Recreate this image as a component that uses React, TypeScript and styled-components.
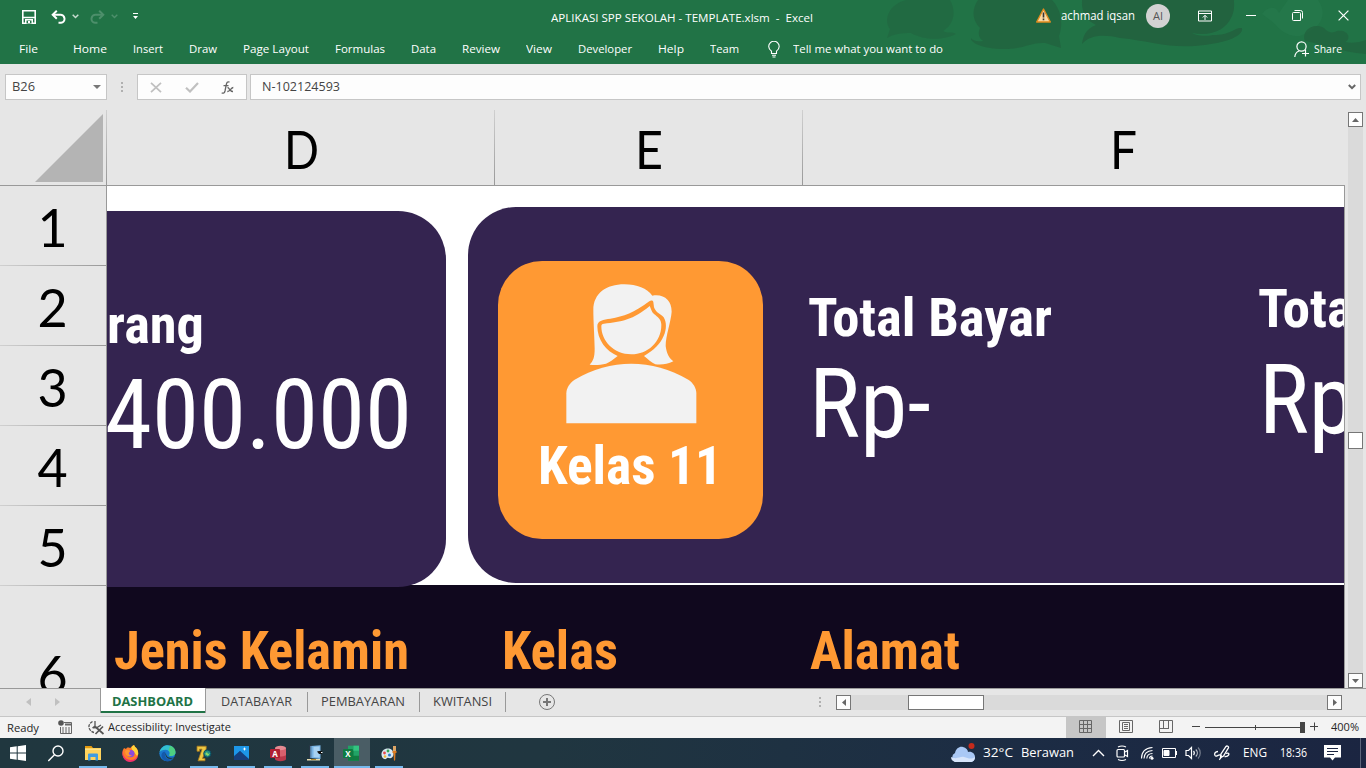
import React, { useLayoutEffect, useRef, useState } from 'react';
import styled, { createGlobalStyle, css } from 'styled-components';

const GlobalStyle = createGlobalStyle`
  * { box-sizing: border-box; }
  body { margin: 0; overflow: hidden; background: #e6e6e6; }
  svg { display: block; flex: none; }
`;

const ui = `'Open Sans', 'Noto Sans', sans-serif`;

/* ---------- text that is condensed or widened to a given width ---------- */

const FitBox = styled.span<{ $w: number }>`
  display: block;
  flex: none;
  width: ${p => p.$w}px;
  white-space: nowrap;
`;
const FitInner = styled.span`
  display: inline-block;
  white-space: pre;
  transform-origin: 0 50%;
`;

function Fit({ w, children }: { w: number; children: string }) {
  const ref = useRef<HTMLSpanElement>(null);
  const [scale, setScale] = useState(1);
  useLayoutEffect(() => {
    if (ref.current && ref.current.offsetWidth) {
      const natural = parseFloat(getComputedStyle(ref.current).width) || ref.current.offsetWidth;
      setScale(w / natural);
    }
  }, [w, children]);
  return (
    <FitBox $w={w}>
      <FitInner ref={ref} style={{ transform: `scaleX(${scale})` }}>{children}</FitInner>
    </FitBox>
  );
}

/* ---------- window frame ---------- */

const Window = styled.div`
  width: 1366px;
  height: 768px;
  display: flex;
  flex-direction: column;
  overflow: hidden;
  font: 12px/16px ${ui};
  background: #e6e6e6;
`;

const Header = styled.header`
  position: relative;
  height: 64px;
  flex: none;
  background: #217346;
  color: #fff;
`;
const HeaderArt = styled.svg`
  position: absolute;
  right: 0;
  top: 0;
`;
const TitleRow = styled.div`
  position: relative;
  height: 33px;
  display: flex;
  align-items: center;
`;
const QuickAccess = styled.div`
  display: flex;
  align-items: center;
  width: 551px;
  padding-left: 22px;
`;
const Spacer = styled.span<{ $w: number }>`
  flex: none;
  width: ${p => p.$w}px;
`;
const TitleText = styled.div`
  padding-top: 3px;
  width: 485px;
  font-size: 11.5px;
`;
const Account = styled.div`
  display: flex;
  align-items: center;
  padding-bottom: 2px;
`;
const Avatar = styled.span`
  width: 24px;
  height: 24px;
  margin: 0 28px 0 11px;
  border-radius: 50%;
  display: flex;
  align-items: center;
  justify-content: center;
  background: #d2d2d2;
  color: #555;
  font-size: 11px;
`;
const Ribbon = styled.nav`
  position: relative;
  height: 31px;
  display: flex;
  align-items: center;
  padding: 1px 0 0 19px;
  font-size: 11.5px;
`;
const RibbonTab = styled.span<{ $first?: boolean }>`
  margin-right: ${p => (p.$first ? 35 : 26)}px;
`;

/* ---------- formula bar ---------- */

const FormulaBar = styled.div`
  height: 46px;
  flex: none;
  display: flex;
  padding: 10px 5px 0;
  color: #444;
`;
const Field = styled.div<{ $w?: number; $pad: number }>`
  display: flex;
  align-items: center;
  height: 26px;
  ${p => (p.$w ? css`width: ${p.$w}px;` : css`flex: 1;`)}
  padding: 0 4px 0 ${p => p.$pad}px;
  border: 1px solid #c6c6c6;
  background: #fdfdfd;
`;
const Push = styled.span`
  flex: 1;
`;
const Grip = styled.span<{ $m: string }>`
  display: flex;
  flex-direction: column;
  flex: none;
  gap: 2px;
  margin: ${p => p.$m};
`;
const GripDot = styled.i`
  width: 2px;
  height: 2px;
  background: #b0b0b0;
`;

/* ---------- worksheet ---------- */

const Work = styled.div`
  display: flex;
  height: 578px;
  flex: none;
`;
const Grid = styled.div`
  width: 1345px;
  display: flex;
  flex-direction: column;
`;
const ColumnHeads = styled.div`
  display: flex;
  height: 76px;
  flex: none;
  overflow: hidden;
  border-bottom: 1px solid #999;
  font: 52px/76px Lato, sans-serif;
  color: #000;
`;
const vLine = css`
  background-image: linear-gradient(#d0d0d0, #999);
  background-size: 1px 100%;
  background-position: right;
  background-repeat: no-repeat;
`;
const Corner = styled.div`
  width: 107px;
  flex: none;
  padding: 4px 0 0 35px;
  ${vLine}
`;
const ColumnHead = styled.div<{ $w: number }>`
  width: ${p => p.$w}px;
  flex: none;
  display: flex;
  justify-content: center;
  padding-top: 1px;
  ${vLine}
`;
const GridBody = styled.div`
  display: flex;
  height: 502px;
`;
const RowHeads = styled.div`
  width: 107px;
  flex: none;
  overflow: hidden;
  border-right: 1px solid #999;
  font: 52px/80px Lato, sans-serif;
  color: #000;
`;
const RowHead = styled.div<{ $tall?: boolean }>`
  height: ${p => (p.$tall ? 180 : 80)}px;
  padding: ${p => (p.$tall ? 48 : 1)}px 1px 0 0;
  text-align: center;
  background: linear-gradient(90deg, #d0d0d0, #999) bottom / 100% 1px no-repeat;
`;
const Sheet = styled.main`
  position: relative;
  width: 1238px;
  overflow: hidden;
  border-right: 1px solid #999;
  background: #fff;
  font-family: Roboto, sans-serif;
  font-stretch: 75%;
`;
const TableHead = styled.div`
  display: flex;
  height: 110px;
  margin-top: 399px;
  padding: 39px 0 0 7px;
  background: #10081e;
  color: #ff9933;
  font-size: 53.33px;
  line-height: 54px;
  font-weight: 700;
`;
const HeadCell = styled.div<{ $w: number }>`
  width: ${p => p.$w}px;
  flex: none;
`;
/* drawing objects that float over the cells */
const Card = styled.section<{ $x: number; $y: number; $w: number }>`
  position: absolute;
  left: ${p => p.$x}px;
  top: ${p => p.$y}px;
  width: ${p => p.$w}px;
  height: 376px;
  border-radius: 48px;
  background: #342450;
`;
const Badge = styled.div`
  position: absolute;
  left: 30px;
  top: 54px;
  width: 265px;
  height: 278px;
  border-radius: 44px;
  padding: 23px 0 0 40px;
  background: #ff9933;
  color: #fff;
  font-size: 53.33px;
  line-height: 54px;
  font-weight: 700;
`;
const PersonIcon = styled.svg`
  margin: 0 0 14px 28px;
`;
const Caption = styled.div<{ $x: number; $y: number }>`
  position: absolute;
  left: ${p => p.$x}px;
  top: ${p => p.$y}px;
  color: #fff;
  font-size: 53.33px;
  line-height: 54px;
  font-weight: 700;
`;
const Amount = styled(Caption)`
  font-size: 96px;
  line-height: 96px;
  font-weight: 400;
`;

/* ---------- scroll bars ---------- */

const VScroll = styled.div`
  width: 15px;
  margin: 2px 0 0 3px;
  display: flex;
  flex-direction: column;
  background: #dadada;
`;
const ScrollButton = styled.span`
  width: 15px;
  height: 15px;
  flex: none;
  display: flex;
  align-items: center;
  justify-content: center;
  border: 1px solid #767676;
  background: #fdfdfd;
`;
const Thumb = styled.span<{ $w: number; $h: number; $m: string }>`
  width: ${p => p.$w}px;
  height: ${p => p.$h}px;
  margin: ${p => p.$m};
  border: 1px solid #767676;
  background: #fff;
`;
const HScroll = styled.div`
  display: flex;
  width: 506px;
  height: 15px;
  background: #dadada;
`;

/* ---------- sheet tabs and status bar ---------- */

const TabStrip = styled.div`
  height: 29px;
  flex: none;
  display: flex;
  border-top: 1px solid #999;
  border-bottom: 1px solid #c6c6c6;
  color: #444;
`;
const TabNav = styled.div`
  display: flex;
  gap: 24px;
  width: 100px;
  padding: 9px 0 0 26px;
`;
const ActiveTab = styled.div`
  width: 106px;
  height: 25px;
  margin-top: -1px;
  padding: 6px 0 0 11px;
  border: solid #999;
  border-width: 0 1px;
  background: linear-gradient(#217346, #217346) bottom / 100% 2px no-repeat #fff;
  color: #217346;
  font-weight: 700;
`;
const SheetTab = styled.div<{ $w: number; $pad?: number }>`
  width: ${p => p.$w}px;
  height: 20px;
  margin-top: 3px;
  padding: 2px 0 0 ${p => p.$pad ?? 13}px;
  border-right: 1px solid #999;
`;
const AddSheet = styled.div`
  width: 313px;
  padding: 5px 0 0 33px;
`;
const HScrollArea = styled.div`
  display: flex;
  padding-top: 6px;
`;
const StatusBar = styled.div`
  height: 21px;
  flex: none;
  display: flex;
  align-items: center;
  padding-left: 7px;
  background: #f3f3f3;
  color: #262626;
  font-size: 11px;
`;
const StatusText = styled.span`
  padding-bottom: 2px;
`;
const ViewButton = styled.span<{ $on?: boolean }>`
  width: 40px;
  height: 21px;
  display: flex;
  align-items: flex-start;
  justify-content: center;
  padding: 3px 1px 0 0;
  background: ${p => (p.$on ? '#c6c6c6' : 'transparent')};
`;

/* ---------- taskbar ---------- */

const Taskbar = styled.footer`
  height: 30px;
  flex: none;
  display: flex;
  padding-left: 1px;
  background: linear-gradient(90deg, #20373f, #203640 40%, #1c2c44 75%, #1b2541);
  color: #fff;
  font-size: 12px;
`;
const TaskButton = styled.span<{ $running?: boolean; $active?: boolean }>`
  width: ${p => (p.$active ? 36 : 37)}px;
  height: 30px;
  margin-right: ${p => (p.$active ? 1 : 0)}px;
  display: flex;
  justify-content: center;
  padding: 7px 1px 0 0;
  background: ${p =>
    p.$active
      ? 'linear-gradient(#76b9ed, #76b9ed) bottom / 100% 2px no-repeat #4a5d65'
      : p.$running
        ? 'linear-gradient(#76b9ed, #76b9ed) 4px 100% / 28px 2px no-repeat'
        : 'none'};
`;
const StartLogo = styled.svg`
  margin-right: 2px;
`;
const Tray = styled.div`
  display: flex;
  align-items: center;
  margin-left: auto;
  width: 416px;
`;
const DesktopEdge = styled.span`
  height: 30px;
  margin-left: 19px;
  border-left: 1px solid #5b647a;
`;

/* ---------- icons ---------- */

const Chevron = ({ color, size = 7 }: { color: string; size?: number }) => (
  <svg width={size} height="5" viewBox="0 0 7 5" fill="none" stroke={color} strokeWidth="1.5">
    <path d="M.7.8 3.5 3.5 6.3.8" />
  </svg>
);
const Triangle = ({ d, color = '#666', w = 7, h = 7 }: { d: string; color?: string; w?: number; h?: number }) => (
  <svg width={w} height={h} viewBox={`0 0 ${w} ${h}`} fill={color}><path d={d} /></svg>
);
const Undo = ({ flip, color }: { flip?: boolean; color: string }) => (
  <svg width="15" height="14" viewBox="0 0 15 14" fill="none" stroke={color} strokeWidth="2">
    <g transform={flip ? 'translate(15 0) scale(-1 1)' : undefined}>
      <path d="M2 4.8H9a4 4 0 0 1 1 8H7.5" /><path d="M5.8.8 1.7 4.8l4.1 4" />
    </g>
  </svg>
);
const RibbonArt = () => (
  <HeaderArt width="486" height="64" viewBox="880 0 486 64" fill="#22633f">
    <path d="M906 0C889 4 883 20 890 29L887 38C893 34 902 33 911 33C925 41 945 40 956 34C952 31 947 34 943 31C955 24 956 10 950 0Z" opacity=".55" />
    <path d="M978 0C970 12 974 22 980 28C976 38 983 40 983 41C977 42 972 40 971 38C970 43 985 50 1008 49C1025 48 1032 42 1045 43L1061 48L1059 36C1064 22 1060 8 1052 0Z" opacity=".8" />
    <path d="M1082 0C1081 14 1088 21 1096 25C1085 29 1083 37 1082 44C1090 35 1103 34 1120 38C1150 41 1168 48 1195 46C1222 44 1244 37 1242 28C1234 27 1232 35 1213 35C1203 37 1195 35 1192 33C1212 37 1226 29 1231 18C1235 11 1234 4 1234 0Z" />
    <path d="M1262 14C1268 6 1276 6 1279 13Q1285 4 1288 0H1318C1328 14 1322 28 1300 36C1282 37 1277 24 1270 20Z" fill="#24774a" />
    <path d="M1305 41C1301 31 1313 22 1324 28Q1330 35 1337 31C1348 29 1352 39 1345 42Q1356 44 1366 40V54C1340 52 1322 44 1305 41Z" opacity=".8" />
  </HeaderArt>
);

const White = { fill: 'none', stroke: '#fff' } as const;

const tabs: [string, number][] = [
  ['File', 19], ['Home', 34], ['Insert', 30], ['Draw', 28], ['Page Layout', 66], ['Formulas', 50],
  ['Data', 25], ['Review', 38], ['View', 26], ['Developer', 54], ['Help', 26], ['Team', 29],
];

function TitleBar() {
  return (
    <Header>
      <RibbonArt />
      <TitleRow>
        <QuickAccess>
          <svg width="14" height="14" viewBox="0 0 14 14" {...White} strokeWidth="1.6">
            <path d="M.8.8h12.4v12.4H.8zM1 7.5h12" /><path d="M3 9h8v4H3z" fill="#fff" stroke="none" />
            <path d="M4.5 10.5h5v3h-5z" fill="#217346" stroke="none" /><path d="M6 11h2v2H6z" fill="#fff" stroke="none" />
          </svg>
          <Spacer $w={15} /><Undo color="#fff" /><Spacer $w={6} /><Chevron color="#c8dcd0" />
          <Spacer $w={11} /><Undo flip color="#4d8f6b" /><Spacer $w={6} /><Chevron color="#4d8f6b" />
          <Spacer $w={15} />
          <svg width="5" height="7" viewBox="0 0 5 7" fill="#fff"><path d="M0 0h5v1H0zM0 3h5L2.500 6z" /></svg>
        </QuickAccess>
        <TitleText><Fit w={262}>APLIKASI SPP SEKOLAH - TEMPLATE.xlsm  -  Excel</Fit></TitleText>
        <Account>
          <svg width="15" height="15" viewBox="0 0 15 15">
            <path d="M7.500 1 14.300 14H.7z" fill="#fbd9a2" stroke="#e08a1e" strokeWidth="1.4" strokeLinejoin="round" />
            <path d="M6.700 4.500h1.600v5H6.700zM6.700 10.500h1.600v1.700H6.700z" fill="#333" />
          </svg>
          <Spacer $w={10} /><Fit w={74}>achmad iqsan</Fit>
          <Avatar>AI</Avatar>
          <svg width="14" height="12" viewBox="0 0 14 12" {...White}>
            <path d="M.5 1h13v10H.5zM1 3.500h12M7 10V5.500M4.800 7.500 7 5.300l2.200 2.200" />
          </svg>
          <Spacer $w={34} />
          <svg width="11" height="12" viewBox="0 0 11 12" {...White}><path d="M0 5.500h10" /></svg>
          <Spacer $w={35} />
          <svg width="11" height="11" viewBox="0 0 11 11" {...White}>
            <path d="M1.500 2.500h6a1 1 0 0 1 1 1v7h-7a1 1 0 0 1-1-1v-6a1 1 0 0 1 1-1zM2.500.5h6a2 2 0 0 1 2 2v6" />
          </svg>
          <Spacer $w={35} />
          <svg width="11" height="11" viewBox="0 0 11 11" {...White} strokeWidth="1.200"><path d="m.6.6 9.800 9.800M10.400.6.6 10.400" /></svg>
        </Account>
      </TitleRow>
      <Ribbon>
        {tabs.map(([name, w], i) => <RibbonTab key={name} $first={i === 0}><Fit w={w}>{name}</Fit></RibbonTab>)}
        <Spacer $w={3} />
        <svg width="12" height="17" viewBox="0 0 12 17" {...White} strokeWidth="1.100">
          <path d="M3.500 12.500v-2.300C2 9 .7 7.600.7 5.500a5.100 5.100 0 0 1 10.500 0c0 2.100-1.300 3.500-2.700 4.700v2.300zM4 14.300h4M4.500 16h3" />
        </svg>
        <Spacer $w={13} /><Fit w={150}>Tell me what you want to do</Fit><Spacer $w={351} />
        <svg width="16" height="17" viewBox="0 0 16 17" {...White} strokeWidth="1.200">
          <circle cx="7.500" cy="5.500" r="4.600" /><path d="M.8 16c.2-3 2-5.200 4.200-6M11.500 8.500v7M8 12.500h7" />
        </svg>
        <Spacer $w={4} /><Fit w={28}>Share</Fit>
      </Ribbon>
    </Header>
  );
}

function FormulaRow() {
  return (
    <FormulaBar>
      <Field $w={102} $pad={6}>
        <Fit w={23}>B26</Fit><Push /><Triangle w={8} h={4} d="M0 0h8L4 4z" color="#777" /><Spacer $w={1} />
      </Field>
      <Grip $m="8px 14px 0"><GripDot /><GripDot /><GripDot /></Grip>
      <Field $w={110} $pad={12}>
        <svg width="12" height="11" viewBox="0 0 12 11" stroke="#c0c0c0" strokeWidth="1.800"><path d="m1 .8 10 9.400M11 .8 1 10.200" /></svg>
        <Spacer $w={23} />
        <svg width="14" height="11" viewBox="0 0 14 11" fill="none" stroke="#c0c0c0" strokeWidth="2.200"><path d="m1 5.800 4 3.700L13 1" /></svg>
        <Spacer $w={22} />
        <svg width="13" height="13" viewBox="0 0 13 13" fill="none" stroke="#666" strokeWidth="1.300">
          <path d="M8.500 1.200C6.500.2 5.700 1.500 5.200 4L4 10c-.5 2-1.500 2.600-3.300 1.900M2.500 4.700h5" />
          <path d="M6.500 6.500c2 0 2 4.300 5.500 4M12.300 6.500c-2.300 0-3.300 4.300-6 4" />
        </svg>
      </Field>
      <Spacer $w={3} />
      <Field $pad={11}>
        <Fit w={78}>N-102124593</Fit><Push />
        <svg width="8" height="6" viewBox="0 0 8 6" fill="none" stroke="#666" strokeWidth="2"><path d="m.8 1 3.200 3.200L7.200 1" /></svg>
      </Field>
    </FormulaBar>
  );
}

function Worksheet() {
  return (
    <Work>
      <Grid>
        <ColumnHeads>
          <Corner><svg width="68" height="69" viewBox="0 0 68 69"><path d="M68 0v68H0z" fill="#b4b4b4" /></svg></Corner>
          <ColumnHead $w={388}><Fit w={35}>D</Fit></ColumnHead>
          <ColumnHead $w={308}><Fit w={28}>E</Fit></ColumnHead>
          <ColumnHead $w={640}><Fit w={27}>F</Fit></ColumnHead>
        </ColumnHeads>
        <GridBody>
          <RowHeads>
            {[1, 2, 3, 4, 5, 6].map(n => <RowHead key={n} $tall={n === 6}>{n}</RowHead>)}
          </RowHeads>
          <Sheet>
            <TableHead>
              <HeadCell $w={388}><Fit w={295}>Jenis Kelamin</Fit></HeadCell>
              <HeadCell $w={308}><Fit w={116}>Kelas</Fit></HeadCell>
              <HeadCell $w={300}><Fit w={150}>Alamat</Fit></HeadCell>
            </TableHead>
            <Card $x={-400} $y={25} $w={739}>
              <Caption $x={400} $y={87}><Fit w={97}>rang</Fit></Caption>
              <Amount $x={398} $y={156}><Fit w={307}>400.000</Fit></Amount>
            </Card>
            <Card $x={361} $y={21} $w={1000}>
              <Badge>
                <PersonIcon width="132" height="141" viewBox="317 280 396 423" fill="#f2f2f2">
                  <path d="M318 698V608C318 592 328 577 343 567C450 503 575 503 684 567C699 577 708 592 708 608V698Z" />
                  <path d="M388 522C398 511 403 500 403 474C402 430 399 390 399 358C399 308 438 281 492 281C530 281 560 293 576 315C611 309 634 329 634 363C632 392 616 435 616 466C619 490 627 502 639 512C621 521 604 523 585 521C574 516 562 505 551 496C611 464 628 410 610 380C601 370 586 366 581 350L579 334C577 328 571 329 567 332C520 366 491 378 450 384C430 387 411 389 411 406C411 448 437 481 472 496C460 505 449 515 437 519C420 523 405 524 388 522Z" />
                  <path d="M423 407C423 402 425 400 431 399C482 394 520 387 568 346C572 354 573 363 581 370C592 379 603 385 603 403C603 454 562 491 513 491C460 491 423 451 423 407Z" />
                </PersonIcon>
                <Fit w={184}>Kelas 11</Fit>
              </Badge>
              <Caption $x={340} $y={84}><Fit w={244}>Total Bayar</Fit></Caption>
              <Amount $x={341} $y={149}><Fit w={122}>Rp-</Fit></Amount>
              <Caption $x={790} $y={75}><Fit w={109}>Total</Fit></Caption>
              <Amount $x={791} $y={145}><Fit w={96}>Rp</Fit></Amount>
            </Card>
          </Sheet>
        </GridBody>
      </Grid>
      <VScroll>
        <ScrollButton><Triangle w={7} h={4} d="M0 4h7L3.500 0z" /></ScrollButton>
        <Thumb $w={15} $h={17} $m="305px 0 0" />
        <Push />
        <ScrollButton><Triangle w={7} h={4} d="M0 0h7L3.500 4z" /></ScrollButton>
      </VScroll>
    </Work>
  );
}

function SheetTabs() {
  return (
    <TabStrip>
      <TabNav>
        <Triangle w={5} h={9} d="M5 0v8L0 4z" color="#c0c0c0" />
        <Triangle w={5} h={9} d="M0 0v8l5-4z" color="#c0c0c0" />
      </TabNav>
      <ActiveTab><Fit w={81}>DASHBOARD</Fit></ActiveTab>
      <SheetTab $w={102} $pad={15}><Fit w={71}>DATABAYAR</Fit></SheetTab>
      <SheetTab $w={112}><Fit w={84}>PEMBAYARAN</Fit></SheetTab>
      <SheetTab $w={86}><Fit w={59}>KWITANSI</Fit></SheetTab>
      <AddSheet>
        <svg width="17" height="17" viewBox="0 0 17 17" fill="none" stroke="#777">
          <circle cx="8" cy="8" r="7.500" /><path d="M8 4v8M4 8h8" strokeWidth="2" />
        </svg>
      </AddSheet>
      <HScrollArea>
        <Grip $m="2px 15px 0 0"><GripDot /><GripDot /><GripDot /></Grip>
        <HScroll>
          <ScrollButton><Triangle w={4} h={7} d="M4 0v7L0 3.500z" /></ScrollButton>
          <Thumb $w={76} $h={15} $m="0 0 0 57px" />
          <Push />
          <ScrollButton><Triangle w={4} h={7} d="M0 0v7l4-3.500z" /></ScrollButton>
        </HScroll>
      </HScrollArea>
    </TabStrip>
  );
}

function Status() {
  return (
    <StatusBar>
      <Fit w={32}>Ready</Fit><Spacer $w={19} />
      <StatusText>
        <svg width="14" height="14" viewBox="0 0 14 14" fill="none" stroke="#666">
          <path d="M6 2.500h7.500v11H2.500V7" /><path d="M7 4.500h6" strokeWidth="2" />
          <path d="M4 8h2m1 0h2m1 0h2M4 10h2m1 0h2m1 0h2M4 12h2m1 0h2m1 0h2" /><circle cx="3" cy="3" r="2.800" fill="#555" stroke="none" />
        </svg>
      </StatusText>
      <Spacer $w={16} />
      <svg width="17" height="15" viewBox="0 0 17 15" fill="none" stroke="#555" strokeWidth="1.300">
        <path d="M4.500 1.500C2 3 .5 5 1 7.500S3.500 12 6 12.500" strokeDasharray="3 1" />
        <path d="M7 1v5l-2.500 2M13 5 9 7.500l-4 .3" /><path d="m7 6.500 8.500 7.500M15 6.500 7.500 14" strokeWidth="1.700" />
      </svg>
      <Spacer $w={3} /><StatusText><Fit w={123}>Accessibility: Investigate</Fit></StatusText><Push />
      <ViewButton $on>
        <svg width="13" height="13" viewBox="0 0 13 13" fill="none" stroke="#666"><path d="M.5.5h12v12H.5zM4.500 0v13M8.500 0v13M0 4.500h13M0 8.500h13" /></svg>
      </ViewButton>
      <ViewButton>
        <svg width="14" height="13" viewBox="0 0 14 13" fill="none" stroke="#666"><path d="M.5.5h13v12H.5zM3.500 2.500h7v8h-7zM5 4.500h4M5 6.500h4M5 8.500h4" /></svg>
      </ViewButton>
      <ViewButton>
        <svg width="14" height="13" viewBox="0 0 14 13" fill="none" stroke="#666"><path d="M.5.5h13v12H.5zM4.500 1v7M9.500 1v7M1 8.500h9" /></svg>
      </ViewButton>
      <Spacer $w={5} />
      <StatusText>
        <svg width="128" height="13" viewBox="0 0 128 13" fill="none" stroke="#444">
          <path d="M1 6.500h8M14 7.500h95M64.500 5v5M119 6.500h8M123.500 2.500v8" /><path d="M109 2h5v11h-5z" fill="#444" stroke="none" />
        </svg>
      </StatusText>
      <Spacer $w={12} /><StatusText><Fit w={28}>400%</Fit></StatusText><Spacer $w={7} />
    </StatusBar>
  );
}

const AppTile = ({ dark, letter, children }: { dark: string; letter: string; children: React.ReactNode }) => (
  <svg width="17" height="17" viewBox="0 0 17 17">
    {children}
    <rect x="0" y="4" width="10" height="9" rx="1" fill={dark} />
    <text x="5" y="11.500" fontFamily="Open Sans, sans-serif" fontSize="8" fontWeight="700" fill="#fff" textAnchor="middle">{letter}</text>
  </svg>
);

function TaskbarRow() {
  return (
    <Taskbar>
      <TaskButton>
        <StartLogo width="16" height="16" viewBox="0 0 16 16" fill="#fff"><path d="m0 2.300 6.700-1v6.200H0zM7.700 1.200 16 0v7.500H7.700zM0 8.500h6.700v6.200L0 13.700zM7.700 8.500H16V16l-8.300-1.200z" /></StartLogo>
      </TaskButton>
      <TaskButton>
        <svg width="17" height="17" viewBox="0 0 17 17" {...White} strokeWidth="1.400"><circle cx="10" cy="6" r="5" /><path d="M6.500 9.700.3 16" /></svg>
      </TaskButton>
      <TaskButton $running>
        <svg width="17" height="16" viewBox="0 0 17 16">
          <path d="M0 1h6.500L8 3H0z" fill="#e39a10" /><path d="M0 3h16v12H0z" fill="#ffd35c" /><path d="M0 4h16v1H0z" fill="#fbe08a" />
          <path d="M3 15.500V9.500q0-1 1-1h8q1 0 1 1v6h-2.500V12h-5v3.500z" fill="#3f9be0" />
        </svg>
      </TaskButton>
      <TaskButton>
        <svg width="17" height="17" viewBox="0 0 17 17">
          <path d="M8 3C5.500 2 4.500 3 4 4L2 3C0 6 0 9 1 11.500a8 8 0 0 0 15-1C17 6 15 3 13 2L12 0C9 1 9 3 8 3z" fill="#ff7b29" />
          <path d="M12 0c-2.500 1-3 3-2 4.500L15 11l1.200-2c0-4-1.500-6-3-7z" fill="#ffd43a" /><path d="M1 5c-1 6 3 10 7.500 10 4 0 6.500-2 7.500-5 0 4-3.500 7-8 7C2 17-1 10 1 5z" fill="#f2316b" />
          <circle cx="8.800" cy="8.600" r="3.700" fill="#8b4bdc" /><path d="M3 6c2-2 4-1 5.500 0L7 7.500C6 9 8 11 10 10c-2 3-7 1-7-4z" fill="#ff9633" />
        </svg>
      </TaskButton>
      <TaskButton>
        <svg width="17" height="17" viewBox="0 0 17 17">
          <circle cx="8.300" cy="8.300" r="8" fill="#1a78cc" />
          <path d="M.4 7.500C1.500 3 5 .3 8.500.3c5 0 8 3.500 8 7 0 3.500-4 4.500-6.500 3.200C12 8 10 4.800 6.500 4.800 3.500 4.800 1.500 5.800.4 7.500z" fill="#32bfd0" />
          <path d="M11 .8c3.500 1 5.500 3.700 5.500 6.500 0 3.500-4 4.500-6.500 3.200 1.500-2 .7-4-.5-4.900z" fill="#55d36c" opacity=".8" />
          <path d="M6.500 7c-2 4 1 8.500 7.500 7C10 18 3.500 16.500 2.500 11.500 2 8 4.500 6 6.500 7z" fill="#1459ab" />
          <path d="M7 8c-.3 4.500 5 6 9 4-1.500 2-7 3-8.700 0C6 10 6.300 8.600 7 8z" fill="#20373f" />
        </svg>
      </TaskButton>
      <TaskButton $running>
        <svg width="17" height="17" viewBox="0 0 17 17">
          <path d="M1 1.200h9.200v2.600L6.500 13.500H9v2.300H2L6 4.200H3.500v2H1z" fill="#edc843" stroke="#a9791c" strokeWidth=".8" />
          <circle cx="11.300" cy="8.600" r="3.600" fill="#238f82" stroke="#0b4d63" /><path d="m9 9 2-2 1 2 2-1-2 3z" fill="#8bdc6b" />
        </svg>
      </TaskButton>
      <TaskButton $running>
        <svg width="15" height="16" viewBox="0 0 15 16"><path d="M0 1h15v14H0z" fill="#1d97e8" /><path d="m0 11 6-5 8 9H0z" fill="#0d4d94" /><path d="m0 12 6-6 9 8v1H0z" fill="#173f7c" /><path d="m10.500 2 .6 1.400 1.400.6-1.400.6-.6 1.400-.6-1.400L8.500 4l1.400-.6z" fill="#fff" /></svg>
      </TaskButton>
      <TaskButton $running>
        <AppTile dark="#b01f32" letter="A">
          <path d="M5 3v11c0 1.300 2.500 2.200 5.500 2.200s5.500-.9 5.500-2.200V3z" fill="#b9384a" />
          <path d="M5 3v7.500c4 1.700 8 1.200 11-.3V3z" fill="#d7606d" /><ellipse cx="10.500" cy="3" rx="5.500" ry="2.200" fill="#e58a92" />
        </AppTile>
      </TaskButton>
      <TaskButton $running>
        <svg width="17" height="16" viewBox="0 0 17 16">
          <path d="M2 0h3v13H2z" fill="#273645" /><path d="M4 1 13.500.3V14L4 13z" fill="#79b4e4" /><path d="m6.500 2 6-.5v11l-6-.5z" fill="#a7d2f2" /><path d="M3 1h1.500v12H3z" fill="#557ea3" />
          <path d="M0 14h13v1.500H0z" fill="#e8dcb0" /><path d="M4 14h5v1H4z" fill="#b58b2c" /><path d="M10 6.500 12 6h3v3h-3z" fill="#111" /><path d="M14 7h1.500v1H14z" fill="#fff" />
        </svg>
      </TaskButton>
      <TaskButton $active>
        <AppTile dark="#0f7c41" letter="X">
          <path d="M5 .7h11v15H5z" fill="#21a366" /><path d="M10.500.7H16v5h-5.500z" fill="#33c481" />
          <path d="M5 5.700h5.500v10H5zM10.500 10.700H16v5h-5.500z" fill="#107c41" />
        </AppTile>
      </TaskButton>
      <TaskButton $running>
        <svg width="17" height="17" viewBox="0 0 17 17">
          <path d="M.5 8.500C1 4.500 6 2.500 9.500 4s4 6.500 1.500 8.500-4-1-5.500 1S0 13 .5 8.500z" fill="#d9e8f2" />
          <circle cx="3.500" cy="8" r="1.400" fill="#e5484d" /><circle cx="7" cy="6" r="1.400" fill="#33a852" /><circle cx="4" cy="11.500" r="1.300" fill="#f2b632" /><circle cx="8.500" cy="10" r="1.500" fill="#2d7dd2" />
          <path d="M12 1h3v5h-3z" fill="#dca566" /><path d="M11.500 6h4v2h-1l-.3 7L13 16l-.5-8h-1z" fill="#dc7a20" />
        </svg>
      </TaskButton>
      <Tray>
        <svg width="25" height="20" viewBox="0 0 25 20">
          <path d="M5 19a5 5 0 0 1 0-9C6 5 10 3 13 4c3 .5 5 3 5 5 4-1 7 2 7 5s-2 5-5 5z" fill="#a9c8f5" />
          <path d="M5 19c-3-1-4-3-4-5 6 3 9-1 13 0s7 3 11 0c0 3-2 5-5 5z" fill="#d7e5fb" /><circle cx="21.500" cy="3" r="3" fill="#c42b1c" />
        </svg>
        <Spacer $w={8} /><Fit w={30}>32°C</Fit><Spacer $w={8} /><Fit w={53}>Berawan</Fit><Spacer $w={18} />
        <svg width="13" height="8" viewBox="0 0 13 8" {...White} strokeWidth="1.400"><path d="M1 7l5.500-5.500L12 7" /></svg>
        <Spacer $w={11} />
        <svg width="13" height="17" viewBox="0 0 13 17" {...White} strokeWidth="1.200">
          <rect x="1" y="4.500" width="7.500" height="7.500" rx="1" /><path d="m9 7 2.500-1.500v6L9 10M2 2c3-1.500 5-1.500 8 0M2 14.500c3 1.500 5 1.500 8 0" />
        </svg>
        <Spacer $w={11} />
        <svg width="14" height="14" viewBox="0 0 14 14" {...White} strokeWidth="1.100">
          <path d="M1.500 12.500c0-6.500 4-10.500 11-11M4 12.500C4 8 7 5 12.500 4.500M6.800 12.500c0-3 2-5 5.700-5M9.500 12.500c0-1.500 1-2.500 3-2.500" /><circle cx="12" cy="12.300" r="1.500" fill="#fff" stroke="none" />
        </svg>
        <Spacer $w={8} />
        <svg width="16" height="10" viewBox="0 0 16 10" {...White}><path d="M.5.500h13v9H.5zM14.500 3v4" /><path d="M2 2.500h5v5H2z" fill="#fff" /></svg>
        <Spacer $w={7} />
        <svg width="17" height="14" viewBox="0 0 17 14" {...White} strokeWidth="1.200">
          <path d="M1 4.500h2.500L6.500 1.500v11L3.500 9.500H1zM8.500 5c1 1.200 1 2.800 0 4" /><path d="M10.800 3.500c2 2 2 5 0 7" opacity=".7" /><path d="M13 1.500c3 3 3 8 0 11" opacity=".4" />
        </svg>
        <Spacer $w={11} />
        <svg width="17" height="17" viewBox="0 0 17 17" {...White} strokeWidth="1.300">
          <path d="M5 6.500C2.500 6.500.8 8.500 2 10.500s3-1 5-.5c2 0 1.500 3-.8 4.800" /><path d="m7.500 12.500.5-3.500 5-7.500c1-1.200 3.200 0 2.300 1.600L10.500 11z" /><path d="M13 8.500c2-1 3.500 0 2.500 1.700s-2.500 1.300-4 1.300" />
        </svg>
        <Spacer $w={13} /><Fit w={24}>ENG</Fit><Spacer $w={13} /><Fit w={27}>18:36</Fit><Spacer $w={17} />
        <svg width="17" height="16" viewBox="0 0 17 16"><path d="M0 0h17v12.500h-6L8.500 15.500 6 12.500H0z" fill="#fff" /><path d="M3 3.500h11M3 6.500h11M3 9.500h7" stroke="#1b2541" /></svg>
        <DesktopEdge />
      </Tray>
    </Taskbar>
  );
}

export default function App() {
  return (
    <Window>
      <GlobalStyle />
      <TitleBar />
      <FormulaRow />
      <Worksheet />
      <SheetTabs />
      <Status />
      <TaskbarRow />
    </Window>
  );
}
